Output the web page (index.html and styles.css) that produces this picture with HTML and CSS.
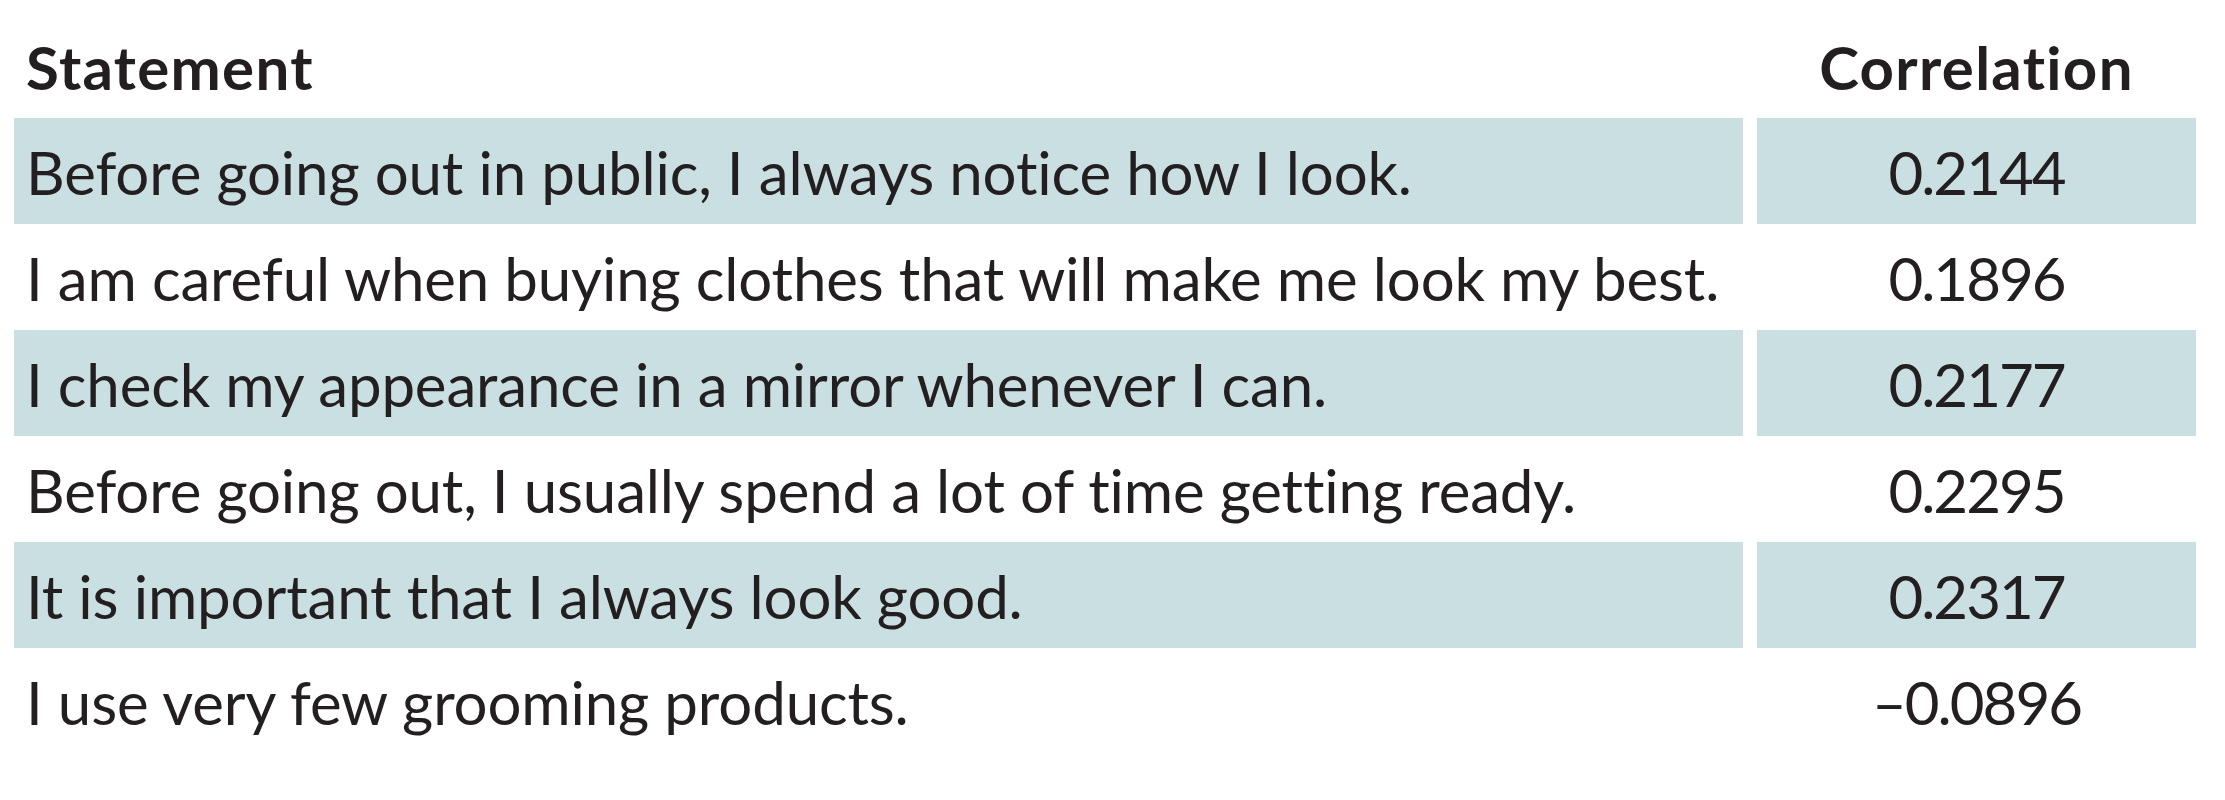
FILE: index.html
```html
<!DOCTYPE html>
<html lang="en">
<head>
<meta charset="utf-8">
<title>Statement correlations</title>
<link rel="stylesheet" href="styles.css">
</head>
<body>
<div class="table">
  <div class="row head">
    <div class="cell stmt">Statement</div>
    <div class="cell num">Correlation</div>
  </div>
  <div class="row shade">
    <div class="cell stmt">Before going out in public, I always notice how I look.</div>
    <div class="cell num">0.2144</div>
  </div>
  <div class="row">
    <div class="cell stmt">I am careful when buying clothes that will make me look my best.</div>
    <div class="cell num">0.1896</div>
  </div>
  <div class="row shade">
    <div class="cell stmt">I check my appearance in a mirror whenever I can.</div>
    <div class="cell num">0.2177</div>
  </div>
  <div class="row">
    <div class="cell stmt">Before going out, I usually spend a lot of time getting ready.</div>
    <div class="cell num">0.2295</div>
  </div>
  <div class="row shade">
    <div class="cell stmt">It is important that I always look good.</div>
    <div class="cell num">0.2317</div>
  </div>
  <div class="row">
    <div class="cell stmt">I use very few grooming products.</div>
    <div class="cell num">–0.0896</div>
  </div>
</div>
</body>
</html>
```
FILE: styles.css
```css
html, body {
  margin: 0;
  padding: 0;
  background: #ffffff;
}

body {
  font-family: Lato, "Open Sans", sans-serif;
  color: #231f20;
}

.table {
  padding-left: 14px;
  display: flex;
  flex-direction: column;
}

.row {
  display: grid;
  grid-template-columns: 1729px 439px;
  column-gap: 14px;
  height: 106px;
}

.cell {
  font-size: 60px;
  line-height: 103px;
  padding-top: 3px;
  white-space: nowrap;
}

.stmt {
  padding-left: 12px;
  letter-spacing: -0.15px;
}

.num {
  text-align: center;
  letter-spacing: -2px;
}

.head {
  height: 118px;
}

.head .cell {
  font-weight: 700;
  padding-top: 16px;
  line-height: 102px;
  letter-spacing: 1.3px;
}

.shade .cell {
  background: #cadfe1;
}
```
